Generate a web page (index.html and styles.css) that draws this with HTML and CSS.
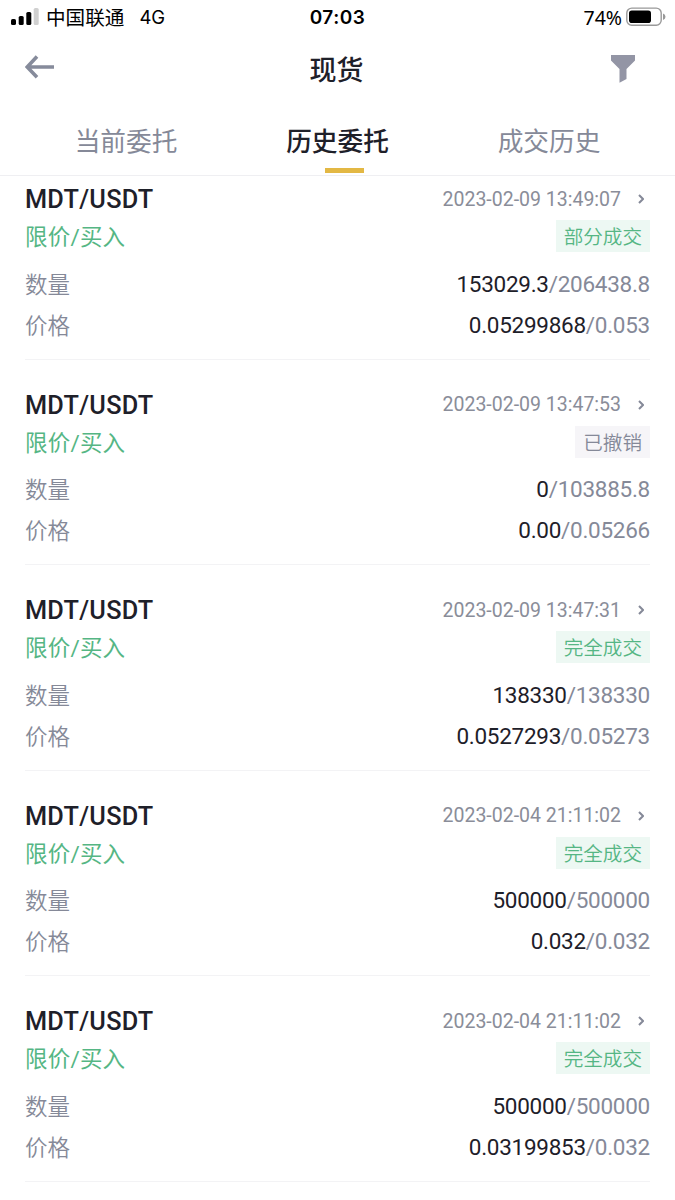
FILE: index.html
```html
<!DOCTYPE html>
<html lang="zh-CN">
<head>
<meta charset="utf-8">
<title>现货</title>
<link rel="stylesheet" href="styles.css">
</head>
<body>
<div class="status">
  <div class="carrier">
    <svg class="signal" width="28" height="18" viewBox="0 0 28 18"><rect x="0" y="11" width="5" height="6" rx="1.6"/><rect x="7.7" y="8" width="5" height="9" rx="1.6"/><rect x="15.3" y="4" width="5" height="13" rx="1.6"/><rect x="22.7" y="0" width="5" height="17" rx="1.6" fill="#d0d0d0"/></svg>
    <span class="operator">中国联通</span><span class="net">4G</span>
  </div>
  <div class="clock">07:03</div>
  <div class="power"><span>74%</span>
    <svg width="40" height="20" viewBox="0 0 40 20"><rect x=".8" y="1.1" width="34.4" height="17.2" rx="5" fill="#fff" stroke="#999" stroke-width="1.4"/><rect x="3" y="3.4" width="22" height="12.6" rx="2.8"/><path d="M37 6.5q2.5 1 2.5 3.2t-2.5 3.2z" fill="#999"/></svg>
  </div>
</div>
<div class="nav">
  <svg width="30" height="24" viewBox="0 0 30 24" fill="none" stroke="#868b9b" stroke-width="3.6"><path d="M12 1.5 2.2 12l9.8 10.3M2.7 12H29"/></svg>
  <h1>现货</h1>
  <svg class="filter" width="24" height="28" viewBox="0 0 24 28" fill="#9395a5"><path d="M0 0H24V5.5L15.5 14V24L8.5 27.7V14L0 5.5Z"/></svg>
</div>
<div class="tabs"><div class="tab">当前委托</div><div class="tab active">历史委托</div><div class="tab">成交历史</div></div>
<div class="orders" id="orders"></div>
<script src="orders.js"></script>
</body>
</html>
```
FILE: styles.css
```css
* { box-sizing: border-box; }
body {
  margin: 0;
  height: 1200px;
  overflow: hidden;
  background: #fff;
  color: #1e2029;
  font-family: Roboto, "Noto Sans CJK SC", sans-serif;
}
svg { display: block; flex: none; }
.status {
  display: grid;
  grid-template-columns: 1fr auto 1fr;
  align-items: center;
  height: 34px;
  padding: 0 9px 0 11px;
  color: #000;
  font-family: Inter, "Noto Sans CJK SC", sans-serif;
  font-size: 19px;
}
.carrier, .power { display: flex; align-items: center; }
.operator { margin: -2px 0 0 7px; font-size: 19.6px; }
.net { margin-left: 15px; font-size: 18.5px; }
.clock { margin-right: 2px; font-weight: 600; letter-spacing: .5px; }
.power { justify-content: flex-end; gap: 4px; font-family: "Noto Sans", sans-serif; font-size: 19.5px; }
.nav {
  display: flex;
  align-items: center;
  justify-content: space-between;
  height: 68px;
  padding: 0 40px 0 25px;
}
.nav h1 { margin: 5px 0 0 7px; font-size: 27px; font-weight: 500; line-height: 40px; }
.nav svg:first-child { margin-bottom: 3px; }
.nav .filter { margin-top: 2px; }
.tabs {
  display: grid;
  grid-template-columns: repeat(3, 211.5px);
  justify-content: center;
  height: 74px;
  border-bottom: 1px solid #efeff2;
  color: #858998;
  font-size: 25.7px;
  line-height: 81px;
  text-align: center;
}
.tab { height: 73px; }
.active { position: relative; color: #1e2029; font-weight: 500; }
.active::after {
  content: "";
  position: absolute;
  left: 93px;
  bottom: 2px;
  width: 39px;
  height: 5px;
  background: #e3b844;
}
.orders { padding: 0 25px; }
.order { height: 205.5px; padding-top: 27px; border-bottom: 1px solid #f3f3f5; }
.order:first-child { height: 183.5px; padding-top: 5px; }
.row { display: flex; align-items: center; justify-content: space-between; height: 41px; }
.head { height: 36px; }
.kind { height: 39px; margin-bottom: 7px; }
.pair { padding-top: 1px; font-size: 25.3px; font-weight: 500; letter-spacing: .25px; }
.time {
  display: flex;
  align-items: center;
  gap: 17px;
  padding-right: 6px;
  color: #8a8d99;
  font-size: 19.5px;
}
.side { padding-bottom: 3px; color: #55b684; font-size: 22.5px; letter-spacing: .2px; }
.badge {
  height: 32px;
  margin-top: -1px;
  padding: 0 8px;
  background: #edf8f3;
  color: #55b684;
  font-family: "Noto Sans CJK SC", sans-serif;
  font-size: 19.6px;
  font-weight: 350;
  line-height: 32px;
}
.cancelled { background: #f6f5f8; color: #858998; }
.label { padding-bottom: 2px; color: #858998; font-size: 22.5px; font-family: "Noto Sans CJK SC", sans-serif; font-weight: 350; }
.value { color: #858998; font-size: 22.5px; letter-spacing: -.27px; }
.value b { color: #1e2029; font-weight: 400; }
```
FILE: orders.js
```js
const orders = [
  ["2023-02-09 13:49:07", "部分成交", "153029.3", "206438.8", "0.05299868", "0.053"],
  ["2023-02-09 13:47:53", "已撤销", "0", "103885.8", "0.00", "0.05266"],
  ["2023-02-09 13:47:31", "完全成交", "138330", "138330", "0.0527293", "0.05273"],
  ["2023-02-04 21:11:02", "完全成交", "500000", "500000", "0.032", "0.032"],
  ["2023-02-04 21:11:02", "完全成交", "500000", "500000", "0.03199853", "0.032"]
];
document.getElementById("orders").innerHTML = orders.map(([time, state, filled, amount, avg, price]) => `
<div class="order">
  <div class="row head"><span class="pair">MDT/USDT</span><span class="time"><span>${time}</span><svg width="6" height="10" viewBox="0 0 6 10" fill="none" stroke="#858998" stroke-width="2"><path d="M1 1l4 4-4 4"/></svg></span></div>
  <div class="row kind"><span class="side">限价/买入</span><span class="badge${state === "已撤销" ? " cancelled" : ""}">${state}</span></div>
  <div class="row"><span class="label">数量</span><span class="value"><b>${filled}</b>/${amount}</span></div>
  <div class="row"><span class="label">价格</span><span class="value"><b>${avg}</b>/${price}</span></div>
</div>`).join("");
```
